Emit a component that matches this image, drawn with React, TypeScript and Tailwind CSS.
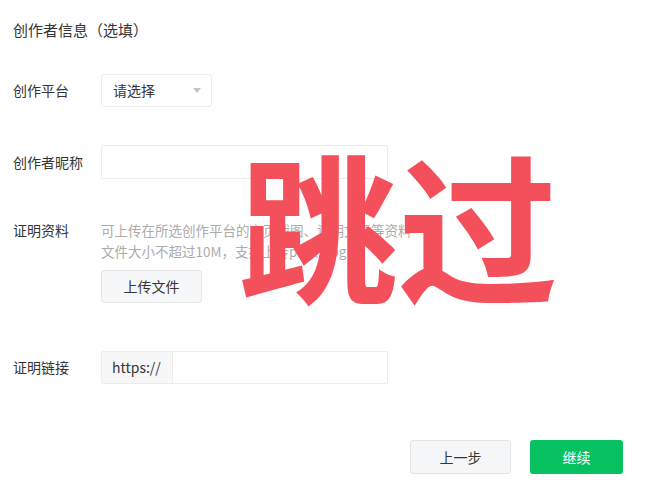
import React from 'react'

const FONT = "font-['Noto_Sans_CJK_SC','Noto_Sans',sans-serif]"

function Label({ children }: { children: React.ReactNode }) {
  return <div className="w-[88px] shrink-0 text-[14px] text-[#353535]">{children}</div>
}

export default function App() {
  return (
    <div className={`relative w-[650px] h-[485px] overflow-hidden bg-white ${FONT}`}>
      <div className="pl-[13px] pt-[20px]">
        <h2 className="h-[20px] leading-[20px] text-[15px] text-[#353535]">创作者信息（选填）</h2>

        <div className="mt-[34px] flex items-center">
          <Label>创作平台</Label>
          <div className="flex h-[33px] w-[111px] items-center justify-between rounded-[3px] border border-[#ececec] pl-[11px] pr-[10px] text-[14px] text-[#353535]">
            <span>请选择</span>
            <span className="h-0 w-0 border-x-[4px] border-t-[5px] border-x-transparent border-t-[#c4c4c4]" />
          </div>
        </div>

        <div className="mt-[38px] flex items-center">
          <Label>创作者昵称</Label>
          <div className="h-[34px] w-[287px] rounded-[2px] border border-[#ececec]" />
        </div>

        <div className="mt-[41px] flex items-start">
          <div className="leading-[21px]">
            <Label>证明资料</Label>
          </div>
          <div>
            <p className="text-[13.5px] leading-[21px] text-[#ababab]">可上传在所选创作平台的主页截图、证明文章等资料</p>
            <p className="text-[13.5px] leading-[21px] text-[#ababab]">文件大小不超过10M，支持上传png、jpg</p>
            <button className="mt-[8px] h-[33px] w-[101px] rounded-[3px] border border-[#e6e6e6] bg-[#f6f7f8] text-[14px] text-[#353535]">
              上传文件
            </button>
          </div>
        </div>

        <div className="mt-[48px] flex items-center">
          <Label>证明链接</Label>
          <div className="flex h-[33px] w-[287px] rounded-[2px] border border-[#ececec]">
            <div className="flex w-[71px] items-center border-r border-[#ececec] bg-[#f7f7f7] pl-[10px] text-[14px] text-[#353535]">
              https://
            </div>
            <div className="flex-1" />
          </div>
        </div>
      </div>

      <div className="mt-[56px] flex justify-end gap-[19px] pr-[27px]">
        <button className="h-[34px] w-[101px] rounded-[3px] border border-[#e4e4e4] bg-[#f5f6f7] text-[14px] text-[#353535]">
          上一步
        </button>
        <button className="h-[34px] w-[93px] rounded-[3px] bg-[#07c160] text-[14px] text-white">继续</button>
      </div>

      <div className="pointer-events-none absolute left-[238px] top-[142px] text-[160px] font-bold leading-none text-[#f4505c]">
        跳过
      </div>
    </div>
  )
}
